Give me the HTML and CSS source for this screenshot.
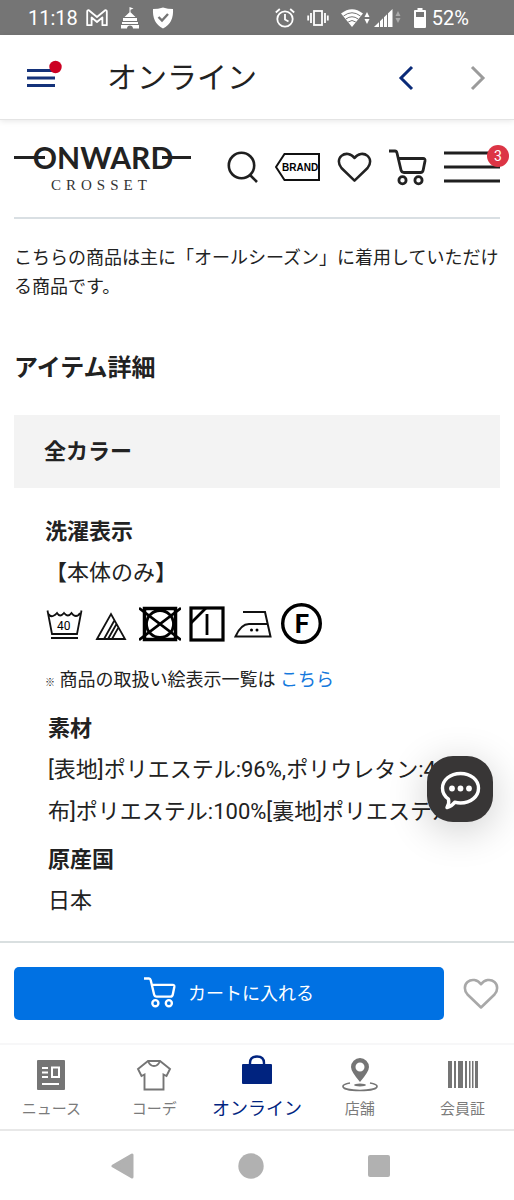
FILE: index.html
```
<!DOCTYPE html>
<html lang="ja">
<head>
  <meta charset="UTF-8" />
  <meta name="viewport" content="width=device-width, initial-scale=1.0" />
  <title>オンライン</title>
  <link rel="stylesheet" href="styles.css">
</head>
<body>
  <svg class="defs" width="0" height="0" aria-hidden="true">
    <symbol id="cart" viewBox="0 0 38 38">
      <g fill="none" stroke="currentColor" stroke-width="2.8">
        <path d="M0 3h6q1.500 0 2 2l4 17q.6 2.500 3 2.500h16.500q2.300 0 2.700-2.500l1.800-9q.4-2.500-2-2.500H9" />
        <circle cx="13.500" cy="32.300" r="3.600" />
        <circle cx="29.500" cy="32.300" r="3.600" />
      </g>
    </symbol>
    <symbol id="heart" viewBox="0 0 36 32">
      <path fill="none" stroke="currentColor" stroke-width="2.600" stroke-linejoin="round" d="M18 29.500L4.500 16.500C1 12.500 1 7 4.500 4 8.500.6 14.500 1.500 18 6.200 21.500 1.500 27.500.6 31.500 4 35 7 35 12.500 31.500 16.500z" />
    </symbol>
  </svg>

  <div class="status-bar">
    <span>11:18</span>
    <svg class="gmail" width="22" height="18" viewBox="0 0 22 18"><path d="M1.200 16.200V2.500q0-1.500 1.600-1.300L11 8l8.200-6.800q1.600-.2 1.600 1.300v13.700h-4.400V8.500L11 13 5.600 8.500v7.700z" fill="none" stroke="#fff" stroke-width="1.800" stroke-linejoin="round" /></svg>
    <svg class="castle" width="20" height="22" viewBox="0 0 20 22"><path fill="#fff" d="M9.500 0l4 1.500-3 1.200v2.500l5 4.800h-11l5-4.800zM3 11h14v3H3zM2 15h16v2H2zM1 21.500V18h18v3.500h-6c0-4-6-4-6 0z" /></svg>
    <svg class="shield" width="22" height="22" viewBox="0 0 22 22"><path fill="#fff" d="M11 .5q5 1.500 10 1.500 1 14-10 19.500Q0 16 1 2 6 2 11 .5z" /><path d="M6.500 10l3.500 3.500L16 7" fill="none" stroke="#757575" stroke-width="2.400" /></svg>
    <div class="status-right">
      <svg width="20" height="20" viewBox="0 0 20 20" fill="none" stroke="#fff" stroke-width="1.800"><circle cx="10" cy="11" r="7.700" /><path d="M10 6v5.500l3.500 2M.8 4.500l4-3.500M19.200 4.500l-4-3.500" /></svg>
      <svg width="22" height="18" viewBox="0 0 22 18" fill="none" stroke="#fff" stroke-width="1.800"><rect x="7" y="2" width="8" height="14" /><path d="M4 4v10M1.200 6.500v5M18 4v10M20.800 6.500v5" /></svg>
      <svg class="wifi" width="30" height="18" viewBox="0 0 30 18"><path fill="#fff" d="M0 4.500Q11-4 22 4.500L11 18z" /><path d="M2.500 7Q11 .5 19.500 7M4.800 10Q11 5.500 17.200 10M7.200 13Q11 10 14.800 13" fill="none" stroke="#757575" stroke-width="1" /><path fill="#fff" d="M23.500 8l2.500-5 2.500 5zM23.500 10h5L26 15z" /></svg>
      <svg width="28" height="20" viewBox="0 0 28 20"><path fill="#fff" d="M0 19L18.500 1v18z" /><path d="M5.500 9v11M9.500 5v15M13.500 2v18" stroke="#757575" stroke-width="1" /><path fill="#aaa" d="M21.500 8L24 3l2.500 5zM21.500 10h5L24 15z" /></svg>
      <svg width="12" height="20" viewBox="0 0 12 20"><path fill="#fff" d="M3.500 0h5v2H11q1 0 1 1v16q0 1-1 1H1q-1 0-1-1V3q0-1 1-1h2.500z" /><path fill="#757575" d="M2 4h8v5H2z" /></svg>
      <span>52%</span>
    </div>
  </div>

  <header class="app-bar">
    <button class="drawer-btn" aria-label="メニュー">
      <svg width="36" height="30" viewBox="0 0 36 30"><path d="M0 11.500h28M0 19h28M0 26.500h28" stroke="#14327a" stroke-width="3" /><circle cx="28.500" cy="8" r="6.200" fill="#cc0022" /></svg>
    </button>
    <h1>オンライン</h1>
    <button class="nav-btn" aria-label="戻る">
      <svg width="16" height="26" viewBox="0 0 16 26"><path d="M14 2L3 13l11 11" fill="none" stroke="#0a2a78" stroke-width="3" /></svg>
    </button>
    <button class="nav-btn" aria-label="進む">
      <svg width="16" height="26" viewBox="0 0 16 26"><path d="M2 2l11 11L2 24" fill="none" stroke="#9b9b9b" stroke-width="3" /></svg>
    </button>
  </header>

  <main>
    <nav class="site-header">
      <a href="#" class="logo" aria-label="ONWARD CROSSET">
        <svg width="178" height="52" viewBox="0 0 178 52">
          <text class="logo-main" x="89" y="28" text-anchor="middle">ONWARD</text>
          <path d="M0 16.500h31M148 16.500h29" stroke="#222" stroke-width="3" />
          <text class="logo-sub" x="37" y="49">CROSSET</text>
        </svg>
      </a>
      <a href="#" aria-label="検索"><svg width="31" height="32" viewBox="0 0 31 32" fill="none" stroke="#1f1f1f" stroke-width="2.600"><circle cx="14.500" cy="14.500" r="12.700" /><path d="M23 24l7 7" /></svg></a>
      <a href="#" aria-label="BRAND"><svg width="45" height="28" viewBox="0 0 45 28"><path d="M9.500 1H44v26H9.500L1 14z" fill="none" stroke="#111" stroke-width="2" /><text class="tag-text" x="7" y="18">BRAND</text></svg></a>
      <a href="#" aria-label="お気に入り"><svg width="35" height="31"><use href="#heart" /></svg></a>
      <a href="#" aria-label="カート"><svg width="38" height="38"><use href="#cart" /></svg></a>
      <button class="menu-btn" aria-label="サイトメニュー">
        <svg width="56" height="32" viewBox="0 0 56 32"><path d="M0 2h56M0 16h56M0 30h56" stroke="#1f1f1f" stroke-width="3" /></svg>
        <span class="badge">3</span>
      </button>
    </nav>

    <p class="season">こちらの商品は主に「オールシーズン」に着用していただける商品です。</p>

    <h2>アイテム詳細</h2>
    <h3 class="color-title">全カラー</h3>

    <section class="care">
      <h4>洗濯表示</h4>
      <p class="care-target">【本体のみ】</p>
      <div class="care-icons">
        <svg width="42" height="41" viewBox="0 0 42 41"><path d="M2.500 7.500L7 31h25l4.500-23.500M3.500 11q2 3 4.500 2t4-3q3 5 7 0 4 5 7.500 0 2 3 4.500 3t4-3M6 35h27" fill="none" stroke="#111" stroke-width="1.800" /><text class="wash-temp" x="12" y="27">40</text></svg>
        <svg width="36" height="41" viewBox="0 0 36 41"><path d="M2 36L16 11l14 25zM9 36l10.500-18.700M17 36l6.500-11.600M13 36l8.500-15" fill="none" stroke="#111" stroke-width="1.800" /></svg>
        <svg width="42" height="41" viewBox="0 0 42 41" fill="none" stroke="#000"><rect x="5.500" y="5.500" width="31" height="31" stroke-width="3.500" /><circle cx="21" cy="21" r="13.500" stroke-width="2.800" /><path d="M0 5l42 32M42 5L0 37" stroke-width="2.800" /></svg>
        <svg width="36" height="41" viewBox="0 0 36 41" fill="none" stroke="#000"><rect x="2" y="5" width="32" height="32" stroke-width="3.200" /><path d="M2 20L17 5M18 11v21" stroke-width="2.800" /></svg>
        <svg width="40" height="41" viewBox="0 0 40 41"><path d="M10 9h22l5.500 24.500H2.500Q8 21 16 21h18.500" fill="none" stroke="#111" stroke-width="2" /><circle cx="18.500" cy="27" r="1.500" /><circle cx="24" cy="27" r="1.500" /></svg>
        <svg width="42" height="41" viewBox="0 0 42 41"><circle cx="20.500" cy="20.500" r="18.800" fill="none" stroke="#000" stroke-width="3.400" /><text class="dry-mark" x="21" y="30" text-anchor="middle">F</text></svg>
      </div>
      <p class="note"><small>※</small> 商品の取扱い絵表示一覧は <a href="#">こちら</a></p>

      <dl>
        <dt>素材</dt>
        <dd class="fabric">[表地]ポリエステル:96%,ポリウレタン:4%[別布]ポリエステル:100%[裏地]ポリエステル</dd>
        <dt>原産国</dt>
        <dd>日本</dd>
      </dl>
      <button class="chat-btn" aria-label="チャット">
        <svg width="66" height="66" viewBox="0 0 66 66"><path d="M33.500 17.500c10.500 0 18 6.500 18 14.700S44 47 33.500 47q-3 0-5.800-.8-2.700 4-7.700 5.300 2.500-4 1.500-8.300-6-4.500-6-11c0-8.200 7.500-14.700 18-14.700z" fill="none" stroke="#fff" stroke-width="3.400" stroke-linejoin="round" /><g fill="#fff"><circle cx="25" cy="32.500" r="2.900" /><circle cx="33.500" cy="32.500" r="2.900" /><circle cx="42" cy="32.500" r="2.900" /></g></svg>
      </button>
    </section>
  </main>

  <footer>
    <div class="buy-bar">
      <button class="add-cart"><svg width="32" height="32"><use href="#cart" /></svg>カートに入れる</button>
      <button class="fav-btn" aria-label="お気に入りに追加"><svg width="36" height="32"><use href="#heart" /></svg></button>
    </div>

    <nav class="tabs">
      <a href="#">
        <svg width="40" height="40" viewBox="0 0 40 40"><rect x="6" y="5" width="28" height="30" rx="1" fill="#757575" /><path d="M11 13h6M11 17.500h6M11 22h6M11 29h17" stroke="#fff" stroke-width="1.800" /><rect x="21" y="12.500" width="7" height="9.500" fill="none" stroke="#fff" stroke-width="2" /></svg>
        ニュース
      </a>
      <a href="#">
        <svg width="40" height="40" viewBox="0 0 40 40"><path d="M14 6h12l10 8-3.500 7-3-1.500v15h-19v-15L7.500 21 4 14zM14 6q2 5 6 5t6-5" fill="none" stroke="#757575" stroke-width="1.900" /></svg>
        コーデ
      </a>
      <a href="#" class="active">
        <svg width="40" height="40" viewBox="0 0 40 40"><rect x="5" y="9" width="30" height="20" rx="1" fill="#00237f" /><path d="M13 10V8q0-6.500 7-6.500T27 8v2" fill="none" stroke="#00237f" stroke-width="2.400" /></svg>
        オンライン
      </a>
      <a href="#">
        <svg width="40" height="40" viewBox="0 0 40 40"><path fill="#757575" fill-rule="evenodd" d="M20 27Q11 16.500 11 12a9 9 0 0118 0q0 4.500-9 15zM20 7.500a4.500 4.500 0 100 9 4.500 4.500 0 000-9z" /><ellipse cx="20" cy="30" rx="6" ry="1.400" fill="#757575" /><path d="M10 28q-7 1.200-7 3.200C3 34 11 35.500 20 35.500S37 34 37 31.200q0-2-7-3.200" fill="none" stroke="#757575" stroke-width="1.700" /></svg>
        店舗
      </a>
      <a href="#">
        <svg width="40" height="40" viewBox="0 0 40 40"><path fill="#757575" d="M5 6h4v27H5zM11 6h2v27h-2zM15 6h5v27h-5zM22 6h2v27h-2zM26 6h1.500v27H26zM29 6h1.500v27H29zM32 6h3v27h-3z" /></svg>
        会員証
      </a>
    </nav>

    <div class="system-nav">
      <button aria-label="戻る"><svg width="26" height="26" viewBox="0 0 26 26"><path d="M3 13L22 2v22z" fill="#b1b1b1" stroke="#b1b1b1" stroke-width="3" stroke-linejoin="round" /></svg></button>
      <button aria-label="ホーム"><svg width="26" height="26" viewBox="0 0 26 26"><circle cx="13" cy="13" r="12.700" fill="#b1b1b1" /></svg></button>
      <button aria-label="履歴"><svg width="26" height="26" viewBox="0 0 26 26"><rect x="2" y="2" width="22" height="22" rx="2" fill="#b1b1b1" /></svg></button>
    </div>
  </footer>
</body>
</html>
```
FILE: styles.css
```
* {
  box-sizing: border-box;
}

body {
  font-family: Roboto, "Noto Sans CJK JP", sans-serif;
  margin: 0;
  min-height: 100vh;
  display: flex;
  flex-direction: column;
  background: #fff;
  color: #222;
}

h1, h2, h3, h4, p, dl, dd {
  margin: 0;
}

a {
  color: inherit;
  text-decoration: none;
}

button {
  padding: 0;
  border: 0;
  background: none;
  color: inherit;
  font-family: inherit;
  cursor: pointer;
}

svg {
  display: block;
  flex: none;
}

.defs {
  position: absolute;
}

.status-bar {
  display: flex;
  align-items: center;
  height: 35px;
  padding: 0 45px 0 28px;
  background: #757575;
  color: #fff;
  font-size: 20px;
  line-height: 24px;
}

.gmail {
  margin-left: 8px;
}

.castle,
.shield {
  margin-left: 12px;
}

.status-right {
  display: flex;
  align-items: center;
  gap: 12px;
  margin-left: auto;
}

.status-right .wifi {
  margin-right: -9px;
}

.status-right span {
  margin-left: -6px;
}

.app-bar {
  display: flex;
  align-items: center;
  height: 85px;
  padding: 2px 28px 0 27px;
  border-bottom: 1px solid #e4e4e4;
  box-shadow: 0 1px 6px rgba(0, 0, 0, 0.1);
}

.drawer-btn {
  margin-bottom: 8px;
}

.app-bar h1 {
  flex: 1;
  margin-left: 44px;
  font-size: 30px;
  font-weight: 400;
  line-height: 40px;
}

.nav-btn {
  margin-left: 56px;
}

main {
  flex: 1;
  padding: 0 14px;
}

.site-header {
  display: flex;
  align-items: center;
  gap: 17px;
  height: 99px;
  padding-bottom: 3px;
  border-bottom: 2px solid #d9dfe3;
}

.logo {
  margin-right: auto;
}

.logo-main {
  font-family: Lato, sans-serif;
  font-size: 30px;
  font-weight: 700;
  fill: #222;
}

.logo-sub {
  font-family: "Liberation Serif", serif;
  font-size: 15px;
  letter-spacing: 5px;
  fill: #333;
}

.tag-text {
  font-family: "Liberation Sans", sans-serif;
  font-size: 10px;
  font-weight: 700;
}

.menu-btn {
  position: relative;
}

.badge {
  position: absolute;
  top: -6px;
  right: -9px;
  width: 22px;
  height: 22px;
  border-radius: 50%;
  background: #dc3545;
  color: #fff;
  font-size: 14px;
  line-height: 23px;
}

.season {
  margin-top: 24px;
  font-size: 18px;
  line-height: 29px;
}

h2 {
  margin-top: 49px;
  font-size: 24px;
  line-height: 36px;
}

.color-title {
  margin-top: 29px;
  padding: 16px 30px;
  background: #f3f3f3;
  font-size: 22px;
  line-height: 41px;
}

.care {
  position: relative;
  margin-top: 23px;
  padding: 0 0 18px 31px;
  font-size: 22px;
  line-height: 41px;
}

.care h4 {
  font-size: 22px;
}

.care-icons {
  display: flex;
  gap: 8px;
  margin-top: 10px;
}

.wash-temp {
  font-family: Roboto, sans-serif;
  font-size: 12px;
}

.dry-mark {
  font-family: Roboto, sans-serif;
  font-size: 26px;
  font-weight: 700;
}

.note {
  margin-top: 22px;
  font-size: 18px;
  line-height: 28px;
}

.note small {
  font-size: 10px;
}

.note a {
  color: #1579dd;
}

dl {
  margin-top: 11px;
  padding-left: 3px;
}

dt {
  font-weight: 700;
}

.fabric {
  margin-bottom: 6px;
  line-height: 42px;
}

.chat-btn {
  position: absolute;
  right: 7px;
  bottom: 117px;
  border-radius: 26px;
  background: #383636;
  box-shadow: 0 8px 40px rgba(0, 0, 0, 0.2);
}

footer {
  background: #fff;
}

.buy-bar {
  display: flex;
  align-items: center;
  gap: 19px;
  padding: 24px 15px 23px 14px;
  border-top: 2px solid #d9dfe0;
}

.add-cart {
  flex: 1;
  display: flex;
  align-items: center;
  justify-content: center;
  gap: 12px;
  height: 53px;
  padding-bottom: 3px;
  border-radius: 5px;
  background: #0071e3;
  color: #fff;
  font-size: 18px;
}

.fav-btn {
  color: #a8a8a8;
}

.tabs {
  display: grid;
  grid-template-columns: repeat(5, 1fr);
  border-top: 2px solid #f7f7f8;
  border-bottom: 2px solid #e8e8e8;
}

.tabs a {
  display: flex;
  flex-direction: column;
  align-items: center;
  padding: 10px 0 6px;
  color: #7b7b7b;
  font-size: 15px;
  line-height: 28px;
}

.tabs .active {
  color: #00237f;
  font-size: 18px;
}

.system-nav {
  display: flex;
  justify-content: center;
  gap: 102px;
  height: 69px;
  padding-right: 13px;
}
```
